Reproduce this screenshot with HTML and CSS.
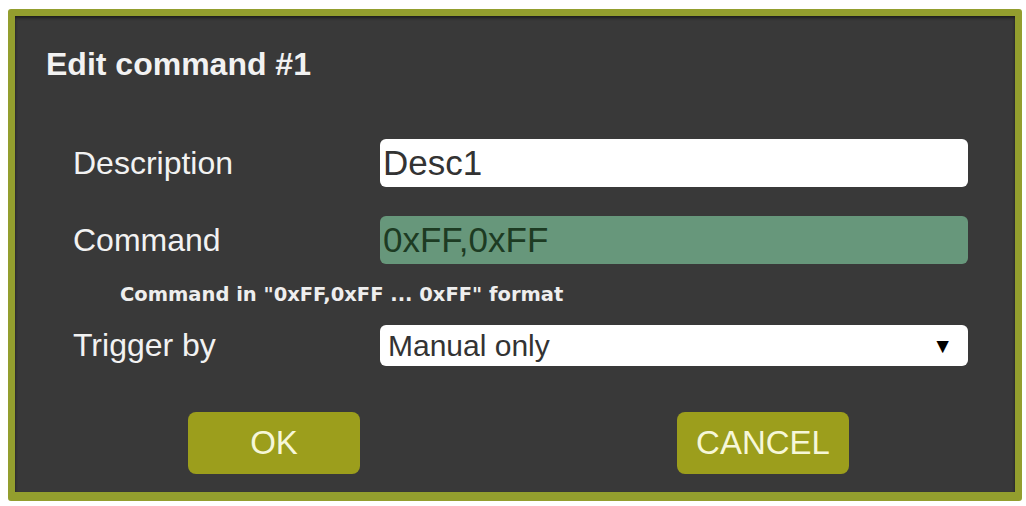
FILE: index.html
```html
<!DOCTYPE html>
<html lang="en">
<head>
  <meta charset="UTF-8" />
  <title>Edit command</title>
  <link rel="stylesheet" href="styles.css">
</head>
<body>

<!-- Edit command dialog -->
<div class="dialog">
  <h1 class="dialog-title">Edit command #1</h1>

  <form class="cmd-form" onsubmit="return false">
    <div class="row">
      <label for="desc">Description</label>
      <input type="text" id="desc" class="field" value="Desc1">
    </div>

    <div class="row row-cmd">
      <label for="cmd">Command</label>
      <input type="text" id="cmd" class="field field-cmd" value="0xFF,0xFF">
    </div>
    <p class="hint">Command in "0xFF,0xFF ... 0xFF" format</p>

    <div class="row row-trigger">
      <label for="trigger">Trigger by</label>
      <div class="select-wrap">
        <select id="trigger" class="field field-select">
          <option>Manual only</option>
          <option>Startup</option>
        </select>
        <span class="arrow">▼</span>
      </div>
    </div>

    <div class="buttons">
      <button class="btn">OK</button>
      <button class="btn">CANCEL</button>
    </div>
  </form>
</div>

</body>
</html>
```

FILE: styles.css
```css
body { margin: 0; background: #fff; font-family: "Liberation Sans", Arial, sans-serif; }

.dialog {
  width: 1000px;
  height: 476px;
  margin: 9px 0 0 8px;
  background: #393939;
  border: 7px solid #939e2e;
  border-bottom-width: 9px;
  border-radius: 3px;
  box-shadow: inset 0 2px 3px rgba(0,0,0,0.5);
  color: #f2f2f2;
}

.dialog-title { margin: 0; padding: 30px 0 0 31px; font-size: 32px; line-height: 36px; font-weight: bold; }

.cmd-form { margin-top: 57px; padding: 0 47px 0 58px; }

.row { display: flex; align-items: center; height: 48px; }
.row label { width: 307px; font-size: 32px; }
.row-cmd { margin-top: 29px; }
.row-trigger { margin-top: 18px; height: 41px; }

.field {
  box-sizing: border-box;
  width: 588px;
  height: 48px;
  border: none;
  border-radius: 6px;
  padding: 0 3px;
  background: #fff;
  color: #333;
  font-family: "Liberation Sans", Arial, sans-serif;
  font-size: 35px;
  outline: none;
}
.field-cmd { background: #67977b; color: #1d3b23; }

.select-wrap { position: relative; }
.field-select { height: 41px; padding: 0 8px; font-size: 30px; appearance: none; -webkit-appearance: none; }
.arrow { position: absolute; right: 15px; top: 9px; font-size: 21px; color: #000; pointer-events: none; }

.hint { margin: 0; height: 24px; padding: 19px 0 0 47px; font-family: "DejaVu Sans", Verdana, sans-serif; font-weight: bold; font-size: 19.5px; line-height: 24px; color: #eee; }

.buttons { display: flex; gap: 317px; margin: 46px 0 0 115px; }
.btn {
  width: 172px;
  height: 62px;
  border: none;
  border-radius: 8px;
  background: #9c9e1c;
  color: #f6f7d8;
  font-family: "Liberation Sans", Arial, sans-serif;
  font-size: 33px;
  cursor: pointer;
}
```
